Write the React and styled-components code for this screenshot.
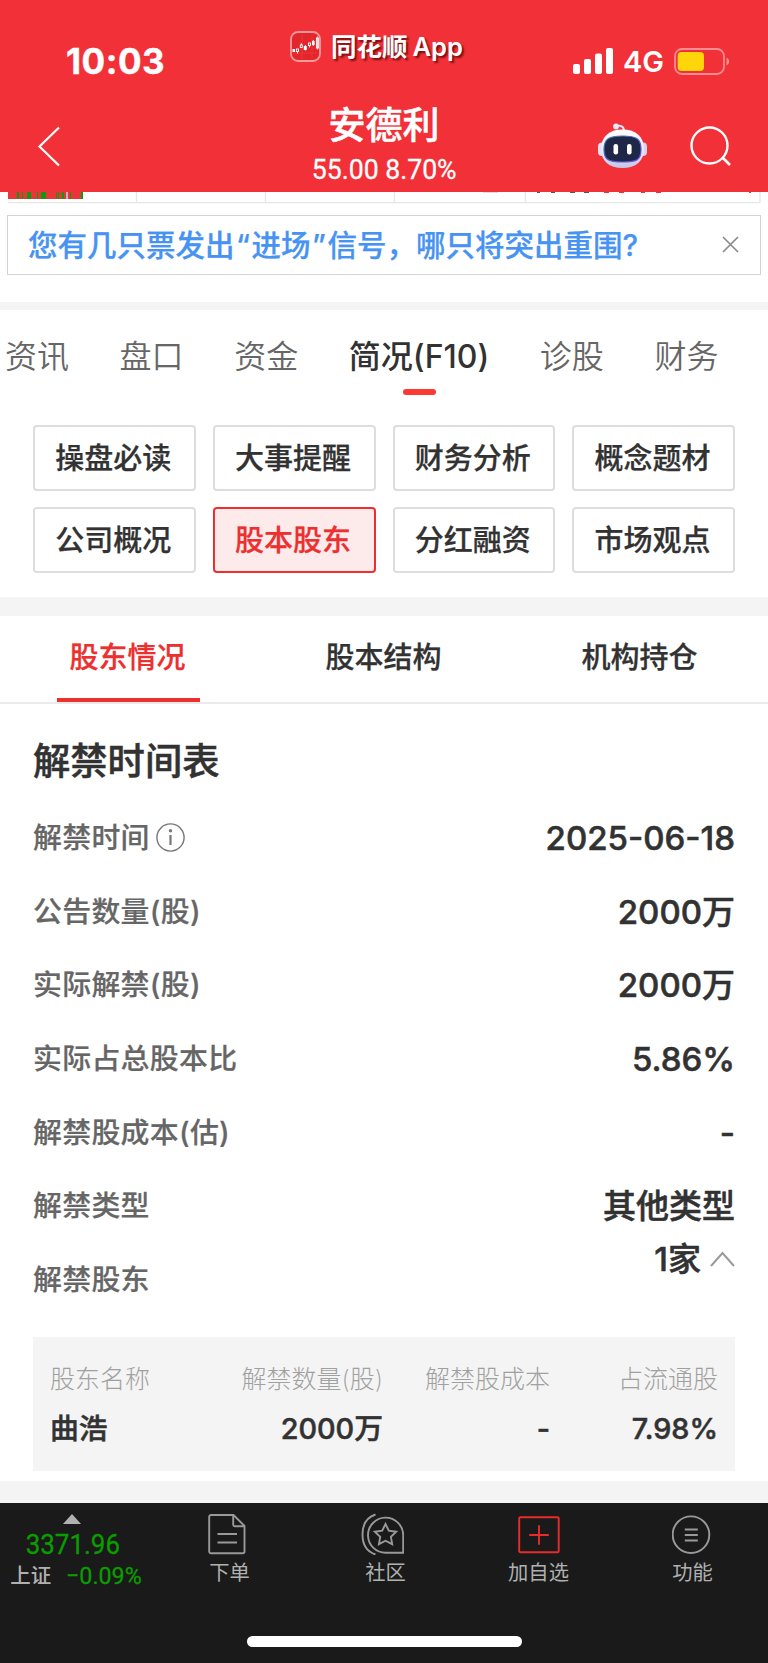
import React, { useState } from "react";
import styled, { createGlobalStyle } from "styled-components";

const GlobalStyle = createGlobalStyle`
  * {
    box-sizing: border-box;
  }
  body {
    margin: 0;
    background: #fff;
    font-family: Inter, "Noto Sans CJK SC", sans-serif;
    color: #323232;
  }
  svg {
    display: block;
    flex: none;
  }
`;

const Page = styled.div`
  width: 768px;
  height: 1663px;
  display: flex;
  flex-direction: column;
  overflow: hidden;
`;

/* header */
const Header = styled.header`
  height: 192px;
  flex: none;
  background: #f23038;
  color: #fff;
`;
const StatusBar = styled.div`
  height: 94px;
  display: grid;
  grid-template-columns: 290px 1fr 195px;
`;
const Clock = styled.div`
  padding: 40px 0 0 66px;
  font-size: 35px;
  line-height: 42px;
  font-weight: 700;
  letter-spacing: 0.5px;
  -webkit-text-stroke: 0.4px;
`;
const AppMark = styled.div`
  display: flex;
  gap: 10px;
  padding-top: 31px;
  height: 62px;
  align-items: center;
`;
const AppName = styled.span`
  font-size: 25.5px;
  line-height: 32px;
  font-weight: 600;
  word-spacing: -1.5px;
  white-space: nowrap;
  text-shadow: 2px 2px 2px rgba(80, 0, 0, 0.75);
`;
const Signals = styled.div`
  display: flex;
  align-items: center;
  height: 28px;
  margin-top: 47px;
`;
const Network = styled.span`
  width: 60px;
  padding: 2px 0 0 9px;
  font-size: 29px;
  line-height: 28px;
  font-weight: 600;
`;
const TitleBar = styled.div`
  height: 98px;
  display: grid;
  grid-template-columns: 288px 192px 1fr;
`;
const Back = styled.div`
  padding: 32px 0 0 37px;
`;
const Title = styled.div`
  display: flex;
  flex-direction: column;
  align-items: center;
`;
const StockName = styled.div`
  margin-top: 7px;
  font-size: 37px;
  line-height: 50px;
  height: 50px;
  font-weight: 500;
  -webkit-text-stroke: 0.5px;
`;
const StockPrice = styled.div`
  margin-top: 3px;
  font-family: Roboto, sans-serif;
  font-size: 28px;
  line-height: 32px;
  -webkit-text-stroke: 0.3px;
  white-space: nowrap;
  transform: scaleX(0.95);
`;
const Actions = styled.div`
  display: flex;
  padding: 29px 0 0 118px;
  gap: 42px;
  svg + svg {
    margin-top: 1px;
  }
`;

const Remnant = styled.div`
  height: 23px;
  flex: none;
`;

/* notice */
const Notice = styled.div`
  flex: none;
  margin: 0 7px;
  height: 60px;
  border: 1px solid #d4d4d4;
  display: flex;
  align-items: center;
  justify-content: space-between;
  padding: 0 21px 4px 20px;
  color: #4793f2;
  font-size: 29.5px;
  font-weight: 500;
  -webkit-text-stroke: 0.25px;
  white-space: nowrap;
  svg {
    margin-top: 2px;
  }
`;
const Quote = styled.span`
  display: inline-block;
  width: 17px;
  text-align: center;
`;

const Band = styled.div`
  flex: none;
  height: ${(props) => props.$height}px;
  margin-top: ${(props) => props.$top || 0}px;
  background: #f4f4f4;
`;

/* first level tabs */
const Tabs = styled.nav`
  flex: none;
  height: 115px;
  padding: 0 0 0 5px;
  display: flex;
  gap: 50.6px;
  overflow: hidden;
`;
const Tab = styled.div`
  display: flex;
  flex-direction: column;
  align-items: center;
  padding-top: 25px;
  font-size: 32px;
  line-height: 44px;
  white-space: nowrap;
  color: ${(props) => (props.$active ? "#323232" : "#666")};
  font-weight: ${(props) => (props.$active ? 500 : 350)};
  &::after {
    content: "";
    width: 33px;
    height: 6px;
    margin-top: 10px;
    border-radius: 3px;
    background: ${(props) => (props.$active ? "#fc3a32" : "transparent")};
  }
`;

const MenuGrid = styled.div`
  flex: none;
  margin: 0 33px;
  display: grid;
  grid-template-columns: repeat(4, 1fr);
  grid-auto-rows: 66px;
  gap: 16px 17px;
`;
const MenuButton = styled.button`
  padding: 2px 2px 0 0;
  border: 2px solid ${(props) => (props.$active ? "#ec3030" : "#ddd")};
  border-radius: 4px;
  background: ${(props) => (props.$active ? "#fdeaea" : "#fff")};
  color: ${(props) => (props.$active ? "#ec3030" : "#323232")};
  font-family: inherit;
  font-size: 29px;
  font-weight: 500;
  line-height: 40px;
  -webkit-text-stroke: 0.25px;
`;

/* second level tabs */
const SubTabs = styled.nav`
  flex: none;
  height: 88px;
  border-bottom: 2px solid #eaeaea;
  display: grid;
  grid-template-columns: repeat(3, 1fr);
  justify-items: center;
`;
const SubTab = styled.div`
  width: 143px;
  height: 86px;
  padding: 22px 1px 0 0;
  text-align: center;
  font-size: 29px;
  line-height: 40px;
  font-weight: 500;
  -webkit-text-stroke: 0.25px;
  color: ${(props) => (props.$active ? "#ec3030" : "#323232")};
  border-bottom: 4px solid
    ${(props) => (props.$active ? "#ec3030" : "transparent")};
`;

/* details */
const Details = styled.section`
  flex: none;
  height: 633px;
  padding: 33px 33px 0;
`;
const Heading = styled.h2`
  margin: 0;
  height: 64px;
  font-size: 37.3px;
  line-height: 50px;
  font-weight: 500;
  -webkit-text-stroke: 0.5px;
`;
const Row = styled.div`
  height: 73.7px;
  display: flex;
  justify-content: space-between;
  align-items: center;
`;
const Label = styled.div`
  display: flex;
  align-items: center;
  gap: 6px;
  font-size: 28.9px;
  line-height: 40px;
  font-weight: 500;
  letter-spacing: 0.3px;
  -webkit-text-stroke: 0.2px;
  color: #666;
`;
const Value = styled.div`
  display: flex;
  align-items: center;
  gap: 9px;
  font-size: 33px;
  line-height: 44px;
  font-weight: 500;
  -webkit-text-stroke: 0.55px;
  margin-top: ${(props) => props.$shift || 0}px;
`;

const Holders = styled.div`
  flex: none;
  margin: 0 33px 10px;
  height: 134px;
  padding: 21px 17px 0 17px;
  background: #f4f4f4;
  display: grid;
  grid-template-columns: 130px 203px 167px 168px;
  grid-template-rows: 42px 57px;
  align-items: center;
  text-align: right;
  > :nth-child(4n + 1) {
    text-align: left;
  }
`;
const HolderHead = styled.div`
  font-size: 25px;
  font-weight: 200;
  line-height: 36px;
  color: #a0a0a0;
`;
const HolderCell = styled.div`
  font-size: 28.8px;
  font-weight: 500;
  line-height: 40px;
  -webkit-text-stroke: 0.5px;
`;

/* bottom bar */
const BottomBar = styled.footer`
  flex: none;
  height: 160px;
  background: #1a1a1a;
  color: #b0b0b0;
`;
const BottomItems = styled.div`
  height: 133px;
  display: grid;
  grid-template-columns: 150px 154px 157px 155px 152px;
`;
const IndexBox = styled.div`
  padding-top: 11px;
  display: flex;
  flex-direction: column;
  align-items: center;
  padding-right: 7px;
`;
const IndexPrice = styled.div`
  margin: 5px 0 0 2px;
  font-family: Roboto, sans-serif;
  font-size: 28.5px;
  line-height: 32px;
  -webkit-text-stroke: 0.3px;
  color: #0a9d00;
  transform: scaleX(0.91);
`;
const IndexChange = styled.div`
  display: flex;
  gap: 13px;
  margin: 1px 0 0 11px;
  font-size: 20.5px;
  line-height: 28px;
  font-weight: 500;
  white-space: nowrap;
  span {
    font-family: Roboto, sans-serif;
    font-size: 24.5px;
    font-weight: 400;
    -webkit-text-stroke: 0.3px;
    color: #0a9d00;
    transform: scaleX(0.95);
  }
`;
const NavItem = styled.div`
  display: flex;
  flex-direction: column;
  align-items: center;
  padding-top: 10px;
  font-size: 20.3px;
  line-height: 28px;
  svg {
    margin-bottom: 4px;
  }
`;
const NavText = styled.span`
  padding-left: ${(props) => props.$indent || 0}px;
`;
const HomeIndicator = styled.div`
  width: 275px;
  height: 11px;
  margin-left: 247px;
  border-radius: 6px;
  background: #fff;
`;

const AppIcon = () => (
  <svg width="31" height="31" viewBox="0 0 31 31">
    <rect x="1" y="1" width="29" height="29" rx="7" fill="#e3262c" stroke="#f59a9b" strokeWidth="1.8" />
    <path d="M12 3v25M22 3v25M3 22h25" stroke="#ee4146" strokeWidth="0.6" />
    <g fill="#fff">
      <rect x="2.5" y="18" width="2.6" height="3" />
      <rect x="13.8" y="15" width="3" height="4" />
      <rect x="22" y="10" width="2.6" height="4" />
    </g>
    <g fill="none" stroke="#fff" strokeWidth="0.9">
      <rect x="6.5" y="18" width="2" height="2.5" />
      <rect x="10.3" y="14" width="2" height="2.5" />
      <rect x="18.5" y="12" width="2" height="2.5" />
      <rect x="26.4" y="7" width="2" height="10" />
      <path d="M7.5 20.5v2.2M11.3 14v-1.8M15.3 14v5.5M19.5 14.5v2M23.3 9v6M27.4 5.5v13" />
    </g>
  </svg>
);

const SignalIcon = () => (
  <svg width="41" height="26" viewBox="0 0 41 26" fill="#fff">
    <rect x="0" y="16" width="7" height="10" rx="2" />
    <rect x="11" y="11" width="7" height="15" rx="2" />
    <rect x="22" y="5.5" width="7" height="20.5" rx="2" />
    <rect x="33" y="0" width="7" height="26" rx="2" />
  </svg>
);

const BatteryIcon = () => (
  <svg width="57" height="27" viewBox="0 0 57 27">
    <rect x="1" y="1" width="49" height="25" rx="7" fill="none" stroke="#f98d91" strokeWidth="1.8" />
    <rect x="3.7" y="4" width="26.3" height="19" rx="4" fill="#ffd60a" />
    <path d="M52.5 9.5c3.5 1.5 3.5 6.5 0 8z" fill="#f98d91" />
  </svg>
);

const RobotIcon = () => (
  <svg width="50" height="46" viewBox="0 0 50 46">
    <defs>
      <linearGradient id="shell" x1="0" y1="0" x2="0" y2="1">
        <stop offset="0" stopColor="#fff" />
        <stop offset="0.6" stopColor="#e8e7f8" />
        <stop offset="1" stopColor="#c3c5e8" />
      </linearGradient>
      <linearGradient id="rim" x1="0" y1="0" x2="1" y2="1">
        <stop offset="0" stopColor="#3c7b9c" />
        <stop offset="1" stopColor="#6b4be6" />
      </linearGradient>
    </defs>
    <path d="M17 3.500c6-2 9 0 9 4.500" fill="none" stroke="#ece9f8" strokeWidth="2" />
    <circle cx="18" cy="3.500" r="2.900" fill="#e9e8f8" />
    <rect x="0" y="19.500" width="8" height="13.500" rx="4" fill="#e0e0f6" />
    <rect x="41" y="19.500" width="8" height="13.500" rx="4" fill="#d6d6f2" />
    <path d="M24.500 6.500C38 6.500 46 14 46 26S38 45 24.500 45 3 38 3 26 11 6.500 24.500 6.500z" fill="url(#shell)" />
    <path d="M24.500 13C38 13 43 15.500 43 26S40 39 24.500 39 6 36 6 26 11 13 24.500 13z" fill="#1f2748" stroke="url(#rim)" strokeWidth="1.200" />
    <rect x="15.500" y="21" width="4.600" height="10.500" rx="2.200" fill="#fff" />
    <rect x="29" y="21" width="4.600" height="10.500" rx="2.200" fill="#fff" />
  </svg>
);

const SearchIcon = () => (
  <svg width="42" height="42" viewBox="0 0 42 42" fill="none" stroke="#fff" strokeWidth="2.400">
    <circle cx="19.500" cy="21.500" r="18" />
    <path d="M32.500 33.500l7.500 7.500" strokeWidth="2.600" />
  </svg>
);

/* colour ticks of the mini chart that is scrolled under the header */
const ticks = [9, 10, 14, 19, 20, 21, 22, 29, 33, 34, 35, 36, 37, 48, 50, 54, 55, 62, 73, 74];

const ChartRemnant = () => (
  <svg width="768" height="13" viewBox="0 0 768 13">
    <rect x="8" width="75" height="7" fill="#e8363b" />
    {ticks.map((x) => (
      <rect key={x} x={8 + x} width="1" height="7" fill="#0c9a10" />
    ))}
    <rect x="66" width="2" height="7" fill="#b9b9b9" />
    <path d="M8 10.700h752M136.500 0v10.500M265.500 0v10.500M394.500 0v10.500M525.500 0v10.500M760 0v11" stroke="#e6e6e6" strokeWidth="1.300" />
    <path d="M537 .5h3M551 .5h4M570 .5h5M584 .5h5" stroke="#555" />
    <path d="M604 .5h5M619 .5h5M641 .5h4M656 .5h5M749 .5h2" stroke="#e33" />
    <path d="M483 .5h15" stroke="#ddd" />
  </svg>
);

const CloseIcon = () => (
  <svg width="17" height="17" viewBox="0 0 17 17" stroke="#888" strokeWidth="1.600">
    <path d="M1 1l15 15M16 1L1 16" />
  </svg>
);

const InfoIcon = () => (
  <svg width="29" height="29" viewBox="0 0 29 29" fill="none" stroke="#777">
    <circle cx="14.500" cy="14.500" r="13.600" strokeWidth="1.400" />
    <path d="M14.500 12v10" strokeWidth="2.200" />
    <circle cx="14.500" cy="7.800" r="1.700" fill="#777" stroke="none" />
  </svg>
);

const ChevronUp = () => (
  <svg width="25" height="16" viewBox="0 0 25 16" fill="none" stroke="#999" strokeWidth="2">
    <path d="M1 15L12.500 2 24 15" />
  </svg>
);

const navIcons = {
  order: (
    <svg width="38" height="42" viewBox="0 0 38 42" fill="none" stroke="#999" strokeWidth="1.900">
      <path d="M3 2h22.500L36.500 13v25.500a1.800 1.800 0 0 1-1.800 1.800H3a1.800 1.800 0 0 1-1.800-1.800V3.800A1.800 1.800 0 0 1 3 2z" />
      <path d="M25.200 2.500v9.300a1.500 1.500 0 0 0 1.500 1.500h10M9.500 21h19.500M9.500 29.500h19.500" />
    </svg>
  ),
  community: (
    <svg width="43" height="42" viewBox="0 0 43 42" fill="none" stroke="#999" strokeWidth="1.900">
      <path d="M42.200 22v17.800H25A17.600 17.600 0 1 1 42.200 22z" />
      <path d="M14.500 1.500C5.500 4.500 1.500 12.500 1.500 21.500s4 17 13 20" />
      <path d="M24.500 11l3.300 6.700 7.400 1-5.300 5.200 1.300 7.300-6.700-3.500-6.600 3.500 1.300-7.300-5.400-5.200 7.400-1z" />
    </svg>
  ),
  add: (
    <svg width="42" height="42" viewBox="0 0 42 42" fill="none" stroke="#e62c2c" strokeWidth="1.900">
      <rect x="1.200" y="4.200" width="39.500" height="35" rx="1" />
      <path d="M11.200 22h19.600M21 12.200v19.600" />
    </svg>
  ),
  more: (
    <svg width="40" height="42" viewBox="0 0 40 42" fill="none" stroke="#999" strokeWidth="1.900">
      <circle cx="19" cy="21.700" r="18.300" />
      <path d="M12.800 16.500h13M12.800 22h13M12.800 27.500h13" strokeWidth="2" />
    </svg>
  ),
};

const tabs = ["资讯", "盘口", "资金", "简况(F10)", "诊股", "财务"];
const menu = [
  "操盘必读",
  "大事提醒",
  "财务分析",
  "概念题材",
  "公司概况",
  "股本股东",
  "分红融资",
  "市场观点",
];
const subTabs = ["股东情况", "股本结构", "机构持仓"];
const rows = [
  { label: "解禁时间", value: "2025-06-18", info: true },
  { label: "公告数量(股)", value: "2000万" },
  { label: "实际解禁(股)", value: "2000万" },
  { label: "实际占总股本比", value: "5.86%" },
  { label: "解禁股成本(估)", value: "-" },
  { label: "解禁类型", value: "其他类型" },
  { label: "解禁股东", value: "1家", shift: -42, fold: true },
];
const holderHeads = ["股东名称", "解禁数量(股)", "解禁股成本", "占流通股"];
const holderCells = ["曲浩", "2000万", "-", "7.98%"];
const navItems = [
  { key: "order", text: "下单", indent: 5 },
  { key: "community", text: "社区", indent: 6 },
  { key: "add", text: "加自选" },
  { key: "more", text: "功能", indent: 1 },
];

function App() {
  const [tab, setTab] = useState("简况(F10)");
  const [item, setItem] = useState("股本股东");
  const [subTab, setSubTab] = useState("股东情况");

  return (
    <Page>
      <GlobalStyle />
      <Header>
        <StatusBar>
          <Clock>10:03</Clock>
          <AppMark>
            <AppIcon />
            <AppName>同花顺 App</AppName>
          </AppMark>
          <Signals>
            <SignalIcon />
            <Network>4G</Network>
            <BatteryIcon />
          </Signals>
        </StatusBar>
        <TitleBar>
          <Back>
            <svg width="24" height="41" viewBox="0 0 24 41" fill="none" stroke="#fff" strokeWidth="2.200">
              <path d="M22 1.500L2.500 20.500 22 39.500" />
            </svg>
          </Back>
          <Title>
            <StockName>安德利</StockName>
            <StockPrice>55.00 8.70%</StockPrice>
          </Title>
          <Actions>
            <RobotIcon />
            <SearchIcon />
          </Actions>
        </TitleBar>
      </Header>

      <Remnant>
        <ChartRemnant />
      </Remnant>
      <Notice>
        <span>
          您有几只票发出<Quote>“</Quote>进场<Quote>”</Quote>信号，哪只将突出重围?
        </span>
        <CloseIcon />
      </Notice>
      <Band $height={8} $top={27} />

      <Tabs>
        {tabs.map((t) => (
          <Tab key={t} $active={t === tab} onClick={() => setTab(t)}>
            {t}
          </Tab>
        ))}
      </Tabs>
      <MenuGrid>
        {menu.map((m) => (
          <MenuButton key={m} $active={m === item} onClick={() => setItem(m)}>
            {m}
          </MenuButton>
        ))}
      </MenuGrid>
      <Band $height={19} $top={24} />

      <SubTabs>
        {subTabs.map((s) => (
          <SubTab key={s} $active={s === subTab} onClick={() => setSubTab(s)}>
            {s}
          </SubTab>
        ))}
      </SubTabs>
      <Details>
        <Heading>解禁时间表</Heading>
        {rows.map((row) => (
          <Row key={row.label}>
            <Label>
              {row.label}
              {row.info && <InfoIcon />}
            </Label>
            <Value $shift={row.shift}>
              {row.value}
              {row.fold && <ChevronUp />}
            </Value>
          </Row>
        ))}
      </Details>
      <Holders>
        {holderHeads.map((h) => (
          <HolderHead key={h}>{h}</HolderHead>
        ))}
        {holderCells.map((c) => (
          <HolderCell key={c}>{c}</HolderCell>
        ))}
      </Holders>
      <Band $height={22} />

      <BottomBar>
        <BottomItems>
          <IndexBox>
            <svg width="18" height="10" viewBox="0 0 18 10">
              <path d="M9 0l9 10H0z" fill="#b0b0b0" />
            </svg>
            <IndexPrice>3371.96</IndexPrice>
            <IndexChange>
              上证 <span>−0.09%</span>
            </IndexChange>
          </IndexBox>
          {navItems.map((n) => (
            <NavItem key={n.key}>
              {navIcons[n.key]}
              <NavText $indent={n.indent}>{n.text}</NavText>
            </NavItem>
          ))}
        </BottomItems>
        <HomeIndicator />
      </BottomBar>
    </Page>
  );
}

export default App;
